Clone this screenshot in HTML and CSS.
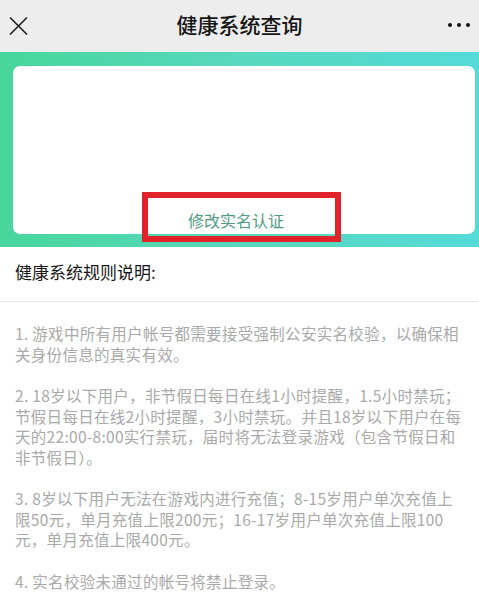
FILE: index.html
```html
<!DOCTYPE html>
<html lang="zh-CN">
<head>
<meta charset="utf-8">
<title>健康系统查询</title>
<link rel="stylesheet" href="styles.css">
</head>
<body>
<header class="topbar">
  <span class="icon-close">
    <svg width="19" height="18" viewBox="0 0 19 18"><path d="M1.5 1 L17.5 17 M17.5 1 L1.5 17" stroke="#222" stroke-width="1.7" fill="none" stroke-linecap="round"/></svg>
  </span>
  <h1 class="title">健康系统查询</h1>
  <span class="icon-more"><i></i><i></i><i></i></span>
</header>
<section class="banner">
  <div class="card">
    <a class="modify-link">修改实名认证</a>
    <span class="mark"></span>
  </div>
</section>
<section class="rules-head">健康系统规则说明:</section>
<section class="rules">
  <p>1. 游戏中所有用户帐号都需要接受强制公安实名校验，以确保相<br>关身份信息的真实有效。</p>
  <p>2. 18岁以下用户，非节假日每日在线1小时提醒，1.5小时禁玩；<br>节假日每日在线2小时提醒，3小时禁玩。并且18岁以下用户在每<br>天的22:00-8:00实行禁玩，届时将无法登录游戏（包含节假日和<br>非节假日）。</p>
  <p>3. 8岁以下用户无法在游戏内进行充值；8-15岁用户单次充值上<br>限50元，单月充值上限200元；16-17岁用户单次充值上限100<br>元，单月充值上限400元。</p>
  <p>4. 实名校验未通过的帐号将禁止登录。</p>
</section>
</body>
</html>
```
FILE: styles.css
```css
* { box-sizing: border-box; }
html, body { margin: 0; padding: 0; background: #fff; }
body {
  width: 479px;
  font-family: "Noto Sans CJK SC", "Noto Sans", sans-serif;
  overflow: hidden;
}
.topbar {
  height: 52px;
  background: #ededed;
  display: flex;
  align-items: center;
  justify-content: space-between;
  padding: 0 9px 0 9px;
  position: relative;
}
.icon-close { display: flex; width: 19px; height: 18px; }
.title {
  margin: 0;
  font-size: 21px;
  font-weight: 500;
  color: #151515;
  position: absolute;
  left: 0; right: 0;
  text-align: center;
  line-height: 52px;
  top: -2px;
  pointer-events: none;
}
.icon-more { display: flex; gap: 4.5px; align-items: center; margin-top: -2px; }
.icon-more i {
  display: block; width: 4.5px; height: 4.5px; border-radius: 50%; background: #111;
}
.banner {
  background: linear-gradient(90deg, #48d69b 0%, #58d8be 50%, #55dad8 100%);
  padding: 14px 4px 13px 13px;
}
.card {
  background: #fff;
  border-radius: 7px;
  height: 168px;
  display: flex;
  flex-direction: column;
  justify-content: flex-end;
  align-items: center;
  padding: 0 0 3px 0;
  position: relative;
}
.modify-link {
  font-size: 16px;
  line-height: 22px;
  color: #4f9c84;
  margin-left: -16px;
}
.mark {
  position: absolute;
  left: 129px;
  top: 126px;
  width: 199px;
  height: 50px;
  border: 6px solid #e2222b;
}
.rules-head {
  height: 55px;
  display: flex;
  align-items: center;
  padding: 0 15px 5px;
  font-size: 17px;
  color: #161616;
  border-bottom: 1px solid #e4e4e4;
}
.rules {
  padding: 21px 4px 0 15px;
}
.rules p {
  margin: 0 0 21px 0;
  font-size: 15.5px;
  line-height: 20.5px;
  letter-spacing: 0.3px;
  color: #a9a9a9;
  white-space: nowrap;
}
```
